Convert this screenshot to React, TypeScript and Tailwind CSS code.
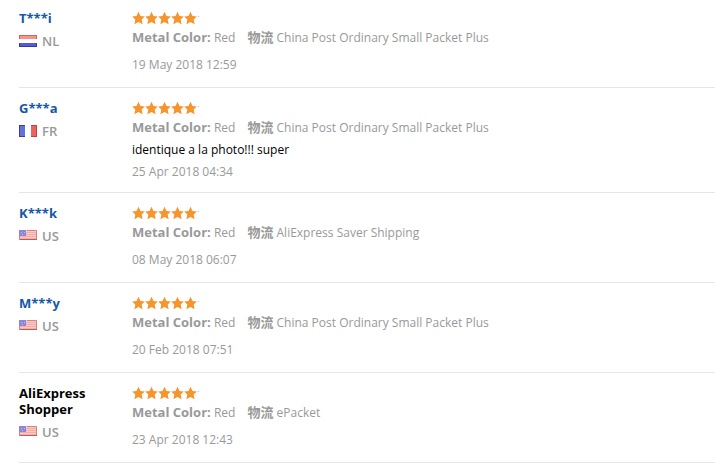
type Country = 'NL' | 'FR' | 'US';

interface Feedback {
    id: number;
    name: string;
    anonymous?: boolean;
    country: Country;
    color: string;
    shipping: string;
    comment?: string;
    date: string;
}

const feedbacks: Feedback[] = [
    { id: 1, name: 'T***i', country: 'NL', color: 'Red', shipping: 'China Post Ordinary Small Packet Plus', date: '19 May 2018 12:59' },
    { id: 2, name: 'G***a', country: 'FR', color: 'Red', shipping: 'China Post Ordinary Small Packet Plus', comment: 'identique a la photo!!! super', date: '25 Apr 2018 04:34' },
    { id: 3, name: 'K***k', country: 'US', color: 'Red', shipping: 'AliExpress Saver Shipping', date: '08 May 2018 06:07' },
    { id: 4, name: 'M***y', country: 'US', color: 'Red', shipping: 'China Post Ordinary Small Packet Plus', date: '20 Feb 2018 07:51' },
    { id: 5, name: 'AliExpress Shopper', anonymous: true, country: 'US', color: 'Red', shipping: 'ePacket', date: '23 Apr 2018 12:43' },
];

function Flag({ country }: { country: Country }) {
    return (
        <svg width="18" height="12" viewBox="0 0 18 12" className="shrink-0" aria-hidden="true">
            {country === 'NL' && (
                <>
                    <rect width="18" height="12" fill="#fff" />
                    <rect width="18" height="4" fill="#cf6560" />
                    <rect x="1" y="1" width="16" height="3" fill="#f8938a" />
                    <rect y="8" width="18" height="4" fill="#34389c" />
                    <rect x="1" y="8" width="16" height="3" fill="#525cd8" />
                </>
            )}
            {country === 'FR' && (
                <>
                    <rect width="18" height="12" fill="#fff" />
                    <rect width="6" height="12" fill="#3a3f9e" />
                    <rect x="1" y="1" width="5" height="10" fill="#6470dc" />
                    <rect x="12" width="6" height="12" fill="#b84444" />
                    <rect x="12" y="1" width="5" height="10" fill="#ea6460" />
                </>
            )}
            {country === 'US' && (
                <>
                    <rect width="18" height="10" fill="#fcc9c5" />
                    <path d="M0 2.5H18M0 4.5H18M0 6.5H18M0 8.5H18" stroke="#f8aca8" />
                    <path d="M8 .5H17.5V9.5" fill="none" stroke="#cf8583" />
                    <path d="M0 9.5H18" stroke="#b5605f" />
                    <rect width="7" height="6" fill="#8b87d8" />
                    <path d="M2 2.5h1M5 2.5h1M3 4.5h1" stroke="#bdbaf0" />
                    <path d="M.5 6V10" stroke="#cf8583" />
                </>
            )}
        </svg>
    );
}

function Stars() {
    return (
        <svg width="68" height="16" viewBox="0 0 68 16" role="img" aria-label="5 out of 5 stars">
            {[0, 1, 2, 3, 4].map(i => (
                <path
                    key={i}
                    transform={`translate(${i * 13} 0)`}
                    d="M6.5 1.8L8.5 5.9L12.8 6.4L9.7 9.6L10.6 14.2L6.5 12.1L2.4 14.2L3.3 9.6L.2 6.4L4.5 5.9Z"
                    fill="#f7952d"
                />
            ))}
            <circle cx="66.5" cy="6.5" r=".8" fill="#e3c9b0" />
        </svg>
    );
}

function FeedbackItem({ feedback }: { feedback: Feedback }) {
    return (
        <li className="flex border-b border-[#e6e6e6] pt-3 pb-[11px] first:pt-[10px]">
            <div className="w-[113px] shrink-0 pr-6">
                <p className="text-[13px] leading-4 font-bold text-black">
                    {feedback.anonymous ? feedback.name : (
                        <a href="#" className="text-[#1458a8]">{feedback.name}</a>
                    )}
                </p>
                <p className="mt-[7px] flex items-center gap-[5px] text-[13px] leading-4 font-semibold text-[#999]">
                    <Flag country={feedback.country} />
                    {feedback.country}
                </p>
            </div>

            <div className="min-w-0 flex-1 text-xs text-[#999]">
                <div className="flex h-[17px]"><Stars /></div>
                <p className="flex flex-wrap gap-x-3 leading-5">
                    <span>
                        <b className="text-[13px] leading-5">Metal Color:</b> {feedback.color}
                    </span>
                    <span>
                        <b className="text-[13px] leading-5">物流</b> {feedback.shipping}
                    </span>
                </p>
                {feedback.comment
                    ? <p className="leading-6 text-black">{feedback.comment}</p>
                    : <div className="h-[7px]" />}
                <p className={feedback.comment ? 'leading-[19px]' : 'mb-px leading-5'}>{feedback.date}</p>
            </div>
        </li>
    );
}

export default function App() {
    return (
        <main className="bg-white pl-[19px] font-['Open_Sans','Noto_Sans_CJK_SC',sans-serif]">
            <ul>
                {feedbacks.map(feedback => (
                    <FeedbackItem key={feedback.id} feedback={feedback} />
                ))}
            </ul>
        </main>
    );
}
